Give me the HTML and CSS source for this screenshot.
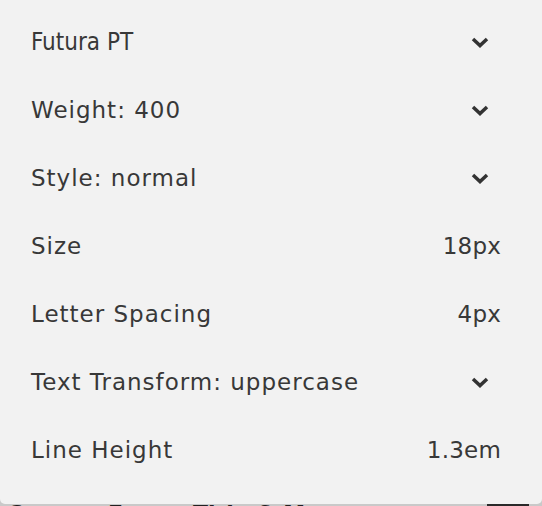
FILE: index.html
```html
<!DOCTYPE html>
<html lang="en">
<head>
  <meta charset="UTF-8">
  <title>Font settings</title>
  <link rel="stylesheet" href="styles.css">
</head>
<body>
  <div class="pannello">
    <div class="riga">
      <span class="etichetta futura">Futura PT</span>
      <svg class="freccia" viewBox="0 0 18 11" width="18" height="11"><path d="M2 2 L9 8.5 L16 2" /></svg>
    </div>
    <div class="riga">
      <span class="etichetta">Weight: 400</span>
      <svg class="freccia" viewBox="0 0 18 11" width="18" height="11"><path d="M2 2 L9 8.5 L16 2" /></svg>
    </div>
    <div class="riga">
      <span class="etichetta">Style: normal</span>
      <svg class="freccia" viewBox="0 0 18 11" width="18" height="11"><path d="M2 2 L9 8.5 L16 2" /></svg>
    </div>
    <div class="riga">
      <span class="etichetta">Size</span>
      <span class="valore">18px</span>
    </div>
    <div class="riga">
      <span class="etichetta">Letter Spacing</span>
      <span class="valore">4px</span>
    </div>
    <div class="riga">
      <span class="etichetta">Text Transform: uppercase</span>
      <svg class="freccia" viewBox="0 0 18 11" width="18" height="11"><path d="M2 2 L9 8.5 L16 2" /></svg>
    </div>
    <div class="riga">
      <span class="etichetta">Line Height</span>
      <span class="valore">1.3em</span>
    </div>
  </div>
  <div class="sezione">
    <span class="titolo">Custom Fonts: Title &amp; Meta</span>
    <span class="icona"></span>
  </div>
</body>
</html>
```

FILE: styles.css
```css
* {
  box-sizing: border-box;
  margin: 0;
  padding: 0;
}

body {
  height: 506px;
  overflow: hidden;
  background: #c9c9c9;
  font-family: "DejaVu Sans", sans-serif;
  color: #383838;
}

.pannello {
  height: 504px;
  background: #f2f2f2;
  border-radius: 0 0 5px 5px;
  padding: 8px 41px 0 31px;
}

.riga {
  height: 68px;
  display: flex;
  align-items: center;
  justify-content: space-between;
  font-size: 23px;
  letter-spacing: 1px;
}

.futura {
  font-family: "DejaVu Sans Condensed", "DejaVu Sans", sans-serif;
  font-size: 24px;
  letter-spacing: 0;
}

.valore {
  letter-spacing: 0.2px;
}

.freccia {
  margin-right: 12px;
  fill: none;
  stroke: #333;
  stroke-width: 3.5;
}

.sezione {
  display: flex;
  justify-content: space-between;
  align-items: flex-start;
  padding: 0 13px 0 7px;
  font-size: 22px;
  line-height: 16px;
  font-weight: bold;
  color: #222;
}

.titolo {
  padding-top: 2px;
}

.icona {
  width: 42px;
  height: 20px;
  background: #2a2a2a;
}
```
